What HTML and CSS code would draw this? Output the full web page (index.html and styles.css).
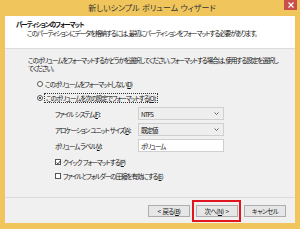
FILE: index.html
```html
<!DOCTYPE html>
<html lang="ja">
<head>
<meta charset="utf-8">
<title>新しいシンプル ボリューム ウィザード</title>
<link rel="stylesheet" href="styles.css">
</head>
<body>
<div class="win">
  <div class="titlebar">
    <span></span>
    <span class="title">新しいシンプル ボリューム ウィザード</span>
    <div class="close">
      <svg width="6" height="6" viewBox="0 0 6 6"><path d="M0.5 0.5L5.5 5.5M5.5 0.5L0.5 5.5" stroke="#fff" stroke-width="1.2"/></svg>
    </div>
  </div>
  <div class="client">
    <div class="header">
      <div class="h-title">パーティションのフォーマット</div>
      <div class="h-sub">このパーティションにデータを格納するには、最初にパーティションをフォーマットする必要があります。</div>
    </div>
    <div class="body">
      <p class="intro">このボリュームをフォーマットするかどうかを選択してください。フォーマットする場合は、使用する設定を選択してください。</p>
      <div class="opt">
        <span class="radio"></span>
        <span>このボリュームをフォーマットしない(<u>D</u>)</span>
      </div>
      <div class="opt">
        <span class="radio on"></span>
        <span class="focus">このボリュームを次の設定でフォーマットする(<u>O</u>):</span>
      </div>
      <div class="fields">
        <span class="lbl">ファイル システム(<u>F</u>):</span>
        <div class="combo"><span>NTFS</span><svg width="5" height="3" viewBox="0 0 5 3"><path d="M0.5 0.5L2.5 2.5L4.5 0.5" stroke="#555" fill="none" stroke-width="0.9"/></svg></div>
        <span class="lbl">アロケーション ユニット サイズ(<u>A</u>):</span>
        <div class="combo"><span>既定値</span><svg width="5" height="3" viewBox="0 0 5 3"><path d="M0.5 0.5L2.5 2.5L4.5 0.5" stroke="#555" fill="none" stroke-width="0.9"/></svg></div>
        <span class="lbl">ボリューム ラベル(<u>V</u>):</span>
        <div class="edit">ボリューム</div>
      </div>
      <div class="chk first">
        <span class="box checked"><svg width="5" height="5" viewBox="0 0 5 5"><path d="M0.6 2.6L1.9 3.9L4.4 0.9" stroke="#222" fill="none" stroke-width="0.9"/></svg></span>
        <span>クイック フォーマットする(<u>P</u>)</span>
      </div>
      <div class="chk">
        <span class="box"></span>
        <span>ファイルとフォルダーの圧縮を有効にする(<u>E</u>)</span>
      </div>
    </div>
    <div class="footer">
      <div class="btn">&lt; 戻る(<u>B</u>)</div>
      <div class="hl"><div class="btn">次へ(<u>N</u>) &gt;</div></div>
      <div class="btn cancel">キャンセル</div>
    </div>
  </div>
</div>
</body>
</html>
```

FILE: styles.css
```css
* { box-sizing: border-box; }
html, body { margin: 0; padding: 0; }
body {
  width: 300px;
  height: 229px;
  overflow: hidden;
  font-family: "Noto Sans CJK JP", "Noto Sans", sans-serif;
  font-feature-settings: "palt";
  font-size: 6.5px;
  letter-spacing: -1px;
  word-spacing: 1px;
  color: #111;
}
u { text-decoration-thickness: 0.5px; text-underline-offset: 1px; }
.win {
  width: 300px;
  height: 229px;
  background: #f0c65c;
  padding: 0 5px 6px;
  display: flex;
  flex-direction: column;
}
.titlebar {
  height: 16px;
  display: grid;
  grid-template-columns: 1fr auto 1fr;
  align-items: start;
  margin: 0 -2px 0 0;
}
.title {
  font-size: 8px;
  line-height: 16px;
  color: #333;
  letter-spacing: 0;
  word-spacing: 0.5px;
  margin-left: 2px;
}
.close {
  justify-self: end;
  width: 13px;
  height: 10px;
  background: #c9504a;
  display: flex;
  align-items: center;
  justify-content: center;
}
.client {
  flex: 1;
  display: flex;
  flex-direction: column;
  background: #f0f0f0;
}
.header {
  height: 33px;
  background: #fff;
  border-bottom: 1px solid #dcdcdc;
  padding: 4px 0 0 11px;
}
.h-title {
  font-weight: bold;
  line-height: 9px;
}
.h-sub {
  line-height: 9px;
  padding-left: 11px;
}
.body {
  height: 148px;
  padding: 7px 0 0 23px;
  display: flex;
  flex-direction: column;
}
.intro {
  margin: 0;
  width: 250px;
  line-height: 8px;
}
.opt {
  display: flex;
  align-items: center;
  gap: 2px;
  height: 14px;
  margin-left: 9px;
}
.opt:first-of-type { margin-top: 5px; }
.radio {
  width: 6px;
  height: 6px;
  border: 1px solid #555;
  border-radius: 50%;
  background: #fff;
  display: flex;
  align-items: center;
  justify-content: center;
}
.radio.on::after {
  content: "";
  width: 2px;
  height: 2px;
  border-radius: 50%;
  background: #222;
}
.focus {
  outline: 1px dotted #333;
  outline-offset: 0;
  line-height: 8px;
  padding: 0 1px;
}
.fields {
  display: grid;
  grid-template-columns: 83px 86px;
  row-gap: 3px;
  align-items: center;
  margin: 2px 0 0 27px;
}
.lbl { white-space: nowrap; word-spacing: 0.5px; }
.combo, .edit {
  height: 13px;
  border: 1px solid #cfcfcf;
  display: flex;
  align-items: center;
  padding: 0 4px 0 2px;
}
.combo {
  background: #eeeeee;
  justify-content: space-between;
}
.edit { background: #fff; }
.chk {
  display: flex;
  align-items: center;
  gap: 2px;
  height: 14px;
  margin-left: 27px;
}
.chk.first { margin-top: 3px; }
.box {
  width: 6px;
  height: 6px;
  border: 1px solid #555;
  background: #fff;
  display: flex;
  align-items: center;
  justify-content: center;
}
.box svg { flex: none; }
.footer {
  flex: 1;
  border-top: 1px solid #dadada;
  display: flex;
  align-items: center;
  padding: 0 0 0 143px;
}
.btn {
  width: 42px;
  height: 12px;
  border: 1px solid #adadad;
  background: #e6e6e6;
  display: flex;
  align-items: center;
  justify-content: center;
  letter-spacing: -0.6px;
}
.hl {
  border: 2.5px solid #e0151f;
  padding: 3px 1.5px;
  margin-left: 2px;
}
.cancel { margin-left: 3px; }
```
